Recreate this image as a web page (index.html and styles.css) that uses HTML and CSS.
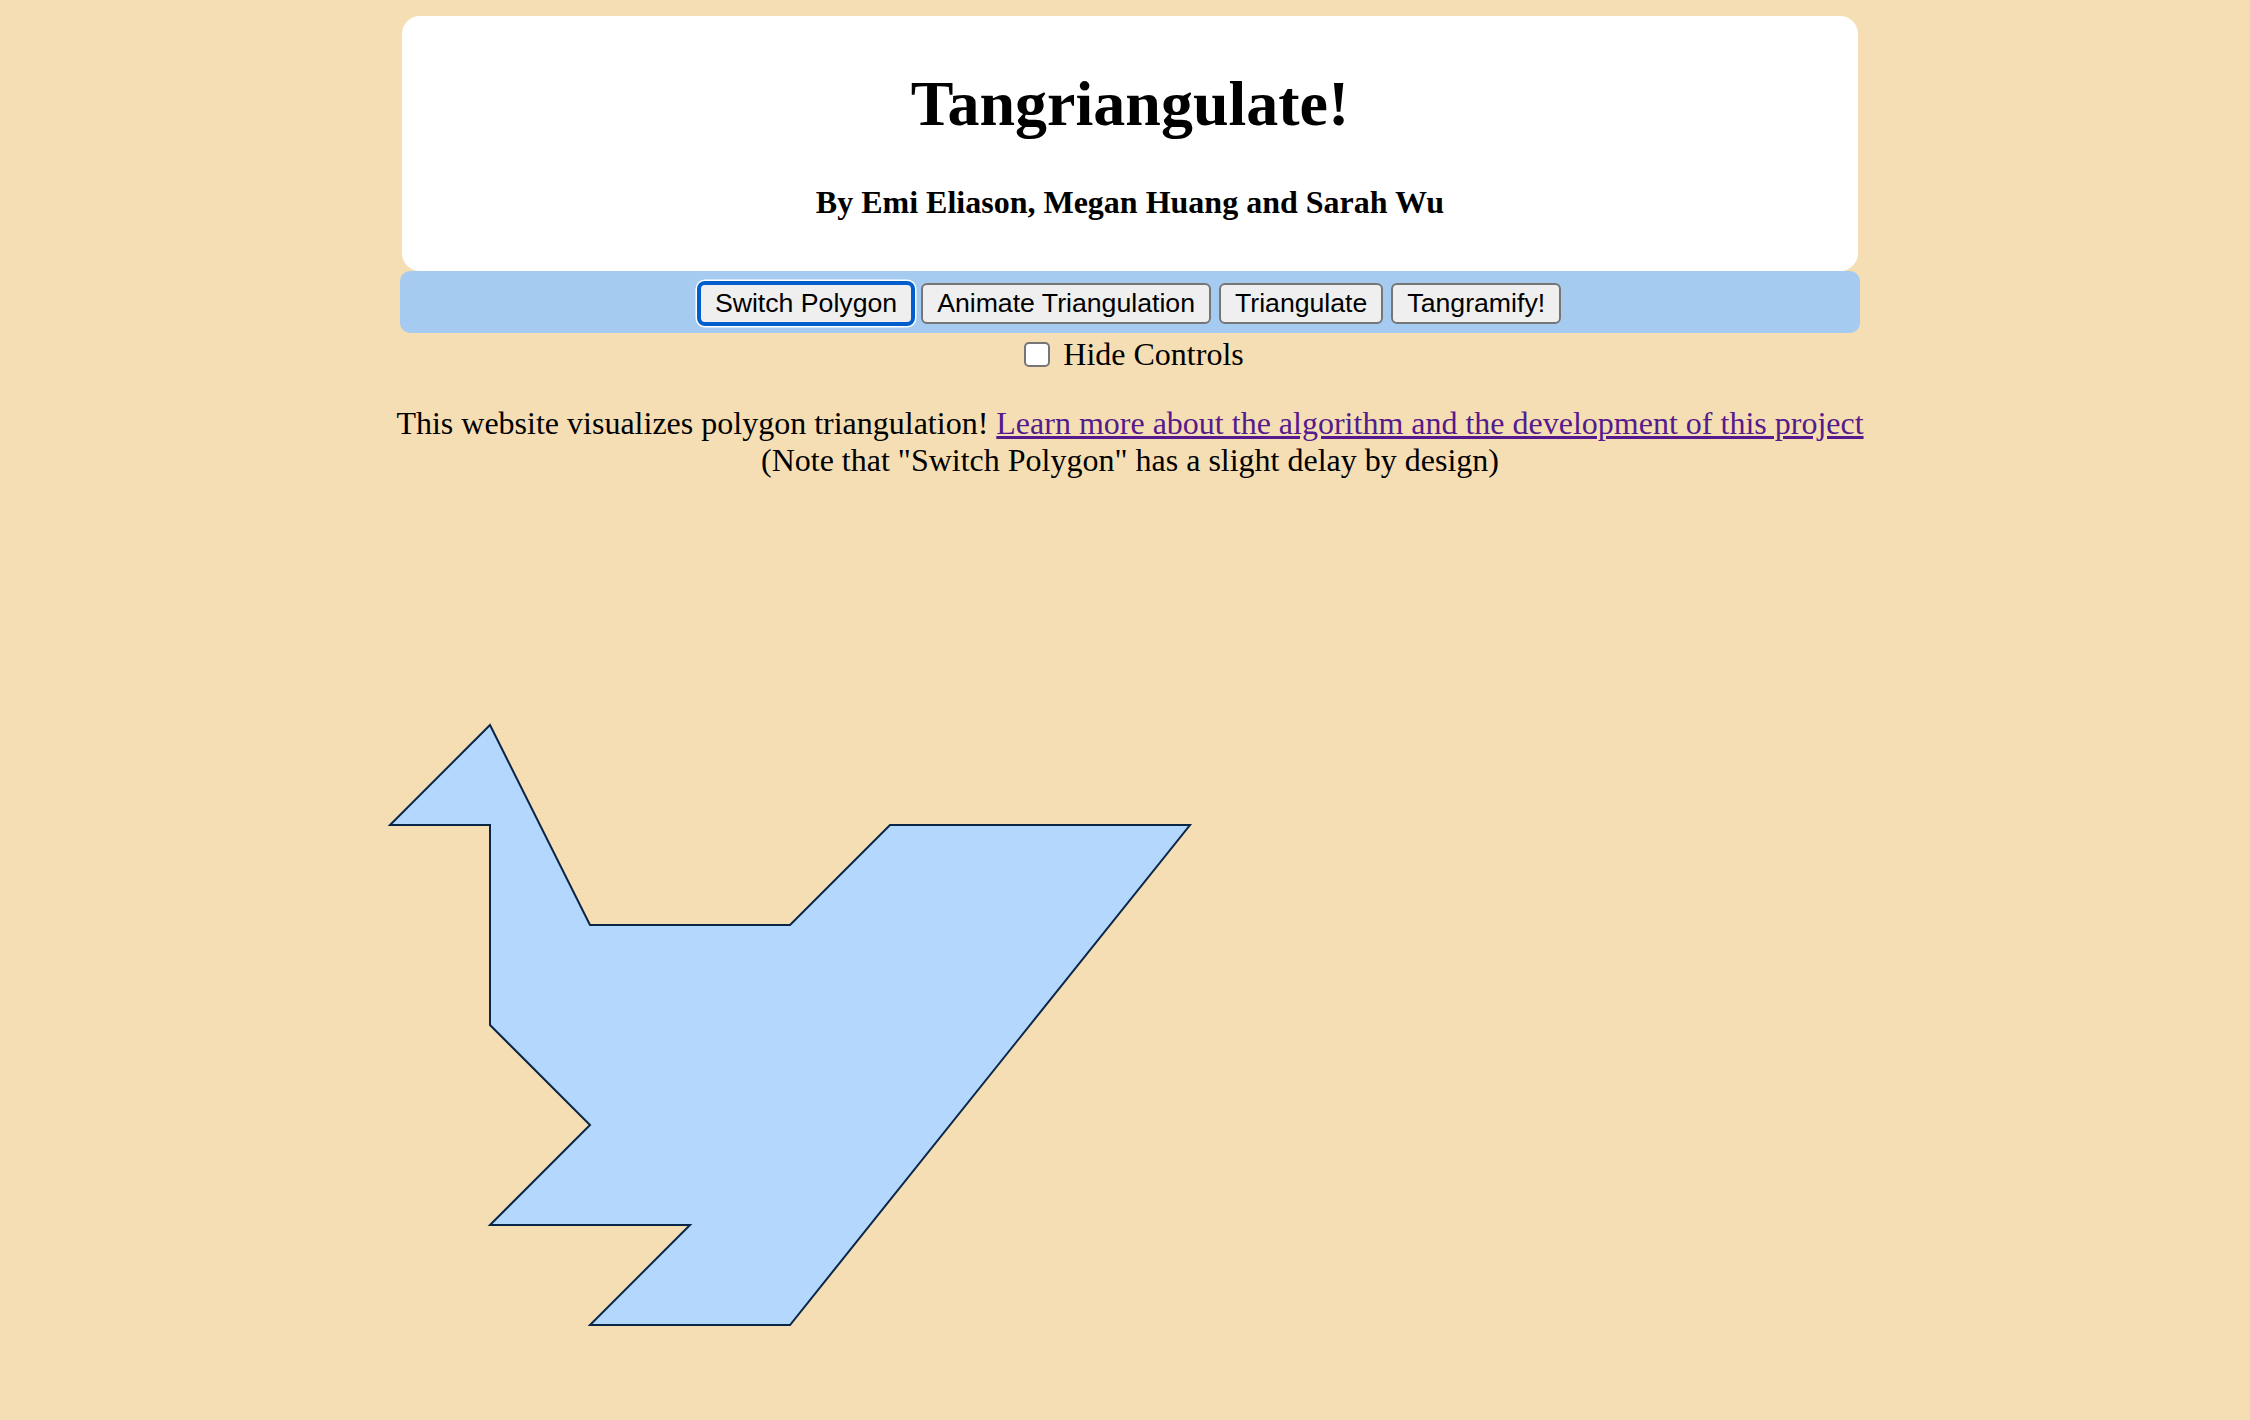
FILE: index.html
```html
<!DOCTYPE html>
<html lang="en">
<head>
<meta charset="utf-8">
<title>Tangriangulate!</title>
<link rel="stylesheet" href="styles.css">
</head>
<body>
<div class="page">
  <header class="header">
    <h1 class="title">Tangriangulate!</h1>
    <h4 class="byline">By Emi Eliason, Megan Huang and Sarah Wu</h4>
  </header>
  <div class="controls">
    <button class="btn btn-focus">Switch Polygon</button>
    <button class="btn">Animate Triangulation</button>
    <button class="btn">Triangulate</button>
    <button class="btn">Tangramify!</button>
  </div>
  <label class="hide-row"><span class="checkbox"></span><span>Hide Controls</span></label>
  <p class="intro">This website visualizes polygon triangulation! <a class="link" href="#">Learn more about the algorithm and the development of this project</a><br>(Note that "Switch Polygon" has a slight delay by design)</p>
</div>
<svg class="canvas" width="1300" height="880" viewBox="26 510 1300 880" xmlns="http://www.w3.org/2000/svg">
  <polygon points="490,724 390,824 490,824 490,1024 590,1124 490,1224 690,1224 590,1324 790,1324 1190,824 890,824 790,924 590,924" fill="#b4d7fe" stroke="#0a2647" stroke-width="2" stroke-linejoin="miter"/>
</svg>
</body>
</html>
```
FILE: styles.css
```css
html {
  background: #f5deb3;
}
body {
  margin: 16px 16px 0 26px;
  font-family: "Liberation Serif", "Times New Roman", serif;
  font-size: 32px;
  color: #000;
}
.page {
  display: flex;
  flex-direction: column;
  align-items: center;
}
.header {
  width: 1456px;
  box-sizing: border-box;
  background: #fff;
  border-radius: 18px;
  padding: 8px 0;
  text-align: center;
}
.title {
  font-size: 64px;
  font-weight: bold;
  margin: 42.88px 0;
}
.byline {
  font-size: 32px;
  font-weight: bold;
  margin: 42.56px 0;
}
.controls {
  width: 1460px;
  height: 62px;
  box-sizing: border-box;
  background: #a6cbf1;
  border-radius: 10px;
  display: flex;
  justify-content: center;
  align-items: center;
  gap: 8px;
  padding-top: 2px;
}
.btn {
  font-family: "Liberation Sans", Arial, sans-serif;
  font-size: 26.67px;
  color: #000;
  background: #efefef;
  border: 2px solid #767676;
  border-radius: 6px;
  height: 41px;
  padding: 0 14px;
  line-height: 1;
}
.btn-focus {
  border-color: #005fcc;
  box-shadow: 0 0 0 2px #005fcc, 0 0 0 3.5px #fff;
}
.hide-row {
  display: flex;
  align-items: center;
  gap: 13px;
  height: 37px;
  margin-top: 3px;
  padding-left: 8px;
}
.checkbox {
  width: 22px;
  height: 21px;
  border: 2px solid #767676;
  border-radius: 5px;
  background: #fff;
}
.intro {
  margin: 32px 0;
  text-align: center;
  line-height: 37px;
  white-space: nowrap;
}
.link {
  color: #551a8b;
}
.canvas {
  display: block;
}
```
